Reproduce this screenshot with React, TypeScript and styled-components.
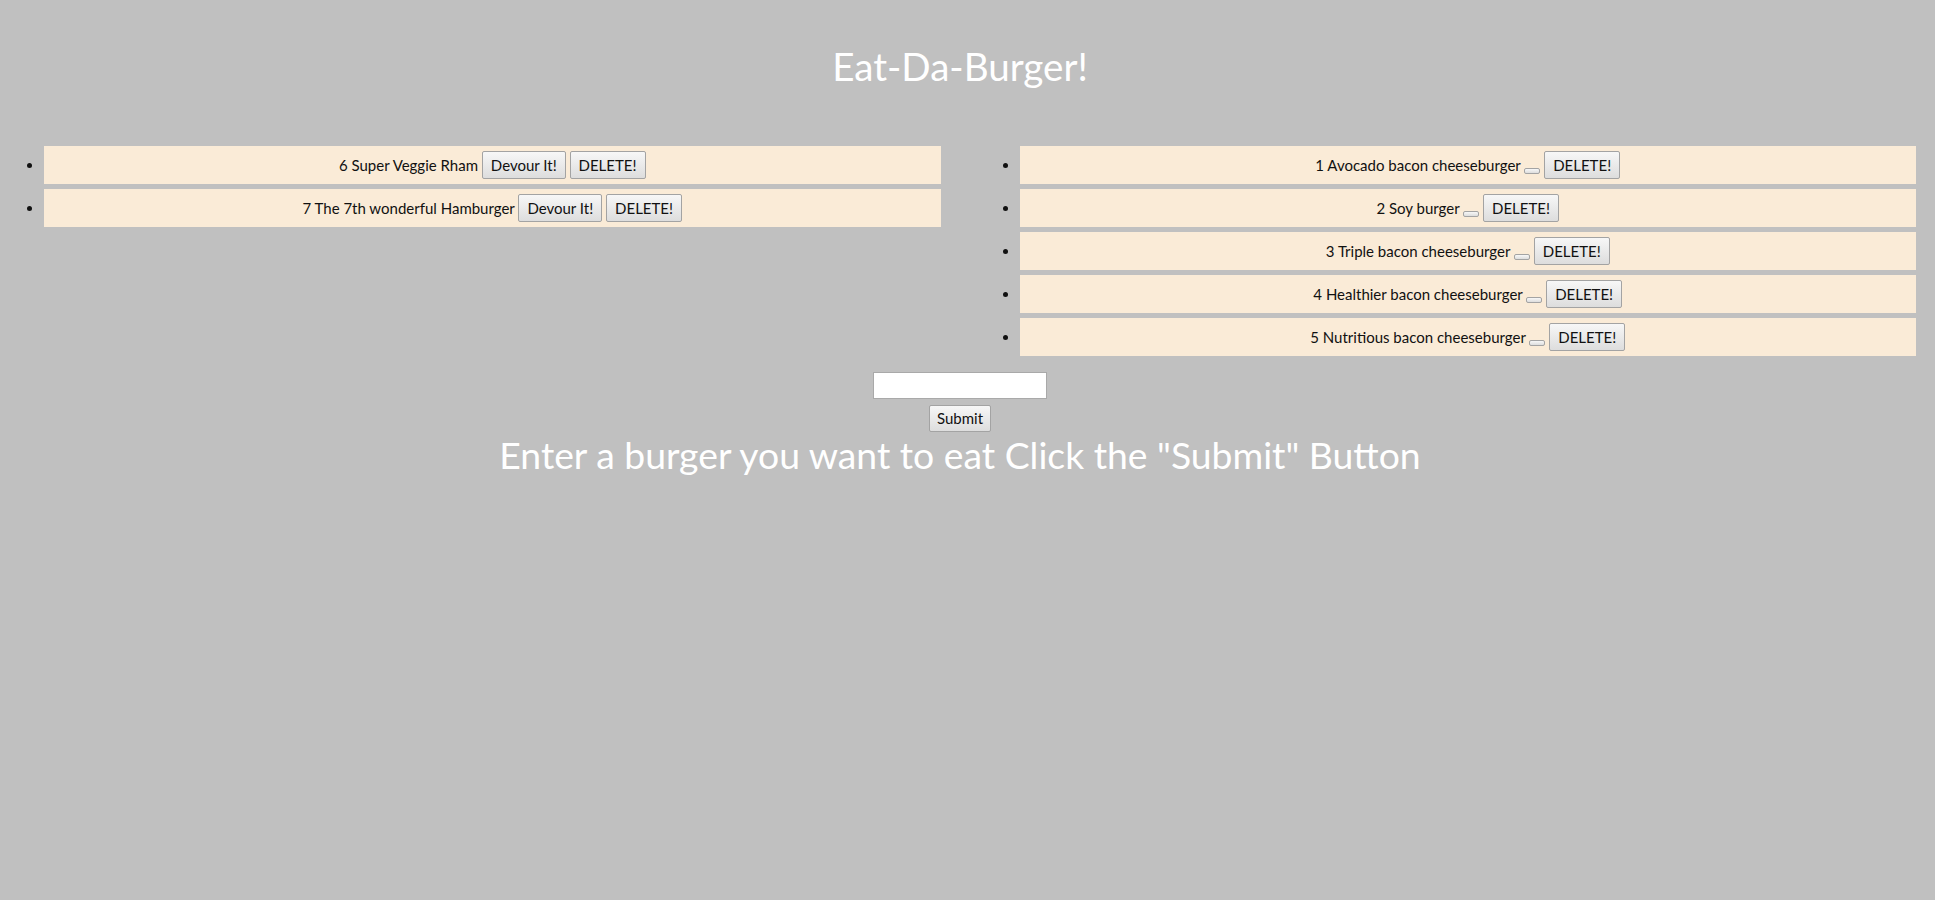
import React from "react";
import styled, { createGlobalStyle } from "styled-components";

const Global = createGlobalStyle`
  html, body { margin: 0; padding: 0; background: #c0c0c0; }
  body { font-family: Lato, "Open Sans", sans-serif; font-size: 15px; color: #111; }
`;

const Page = styled.div`
  width: 1920px;
  padding: 0 4px;
  box-sizing: border-box;
`;

const Title = styled.h1`
  margin: 42px 0 0;
  font-size: 38.6px;
  line-height: 48px;
  font-weight: 400;
  color: #fff;
  text-align: center;
`;

const Columns = styled.div`
  display: grid;
  grid-template-columns: 1fr 1fr;
  column-gap: 39px;
  align-items: start;
  margin-top: 56px;
`;

const List = styled.ul`
  margin: 0;
  padding-left: 40px;
  list-style: disc;
`;

const Item = styled.li`
  background: #faebd7;
  padding: 5px;
  margin-bottom: 5px;
  text-align: center;
  line-height: 28px;
  &:last-child { margin-bottom: 0; }
`;

const Btn = styled.button<{ $wide?: boolean }>`
  font-family: Lato, "Open Sans", sans-serif;
  font-size: 15px;
  line-height: 22px;
  color: #111;
  padding: 2px ${(p) => (p.$wide ? 8 : 7)}px;
  margin: 0;
  border: 1px solid #a3a3a3;
  border-radius: 2px;
  background: linear-gradient(#f7f7f7, #dddddd);
  vertical-align: baseline;
`;

const Form = styled.form`
  display: flex;
  flex-direction: column;
  align-items: center;
  gap: 6px;
  margin-top: 16px;
`;

const Input = styled.input`
  width: 174px;
  height: 27px;
  box-sizing: border-box;
  border: 1px solid #a9a9a9;
  background: #fff;
  margin: 0;
`;

const Submit = styled(Btn)`
  height: 27px;
  line-height: 21px;
  padding: 0 7px;
`;

const Hint = styled.h2`
  margin: 0;
  font-size: 37.3px;
  line-height: 46px;
  font-weight: 400;
  color: #fff;
  text-align: center;
`;

type Burger = { id: number; name: string };

const waiting: Burger[] = [
  { id: 6, name: "Super Veggie Rham" },
  { id: 7, name: "The 7th wonderful Hamburger" },
];

const eaten: Burger[] = [
  { id: 1, name: "Avocado bacon cheeseburger" },
  { id: 2, name: "Soy burger" },
  { id: 3, name: "Triple bacon cheeseburger" },
  { id: 4, name: "Healthier bacon cheeseburger" },
  { id: 5, name: "Nutritious bacon cheeseburger" },
];

export default function App() {
  return (
    <Page>
      <Global />
      <Title>Eat-Da-Burger!</Title>
      <Columns>
        <List>
          {waiting.map((b) => (
            <Item key={b.id}>
              {b.id} {b.name} <Btn type="button" $wide>Devour It!</Btn>{" "}
              <Btn type="button" $wide>DELETE!</Btn>
            </Item>
          ))}
        </List>
        <List>
          {eaten.map((b) => (
            <Item key={b.id}>
              {b.id} {b.name} <Btn type="button"></Btn>{" "}
              <Btn type="button" $wide>DELETE!</Btn>
            </Item>
          ))}
        </List>
      </Columns>
      <Form onSubmit={(e) => e.preventDefault()}>
        <Input type="text" />
        <Submit type="submit">Submit</Submit>
      </Form>
      <Hint>Enter a burger you want to eat Click the "Submit" Button</Hint>
    </Page>
  );
}
